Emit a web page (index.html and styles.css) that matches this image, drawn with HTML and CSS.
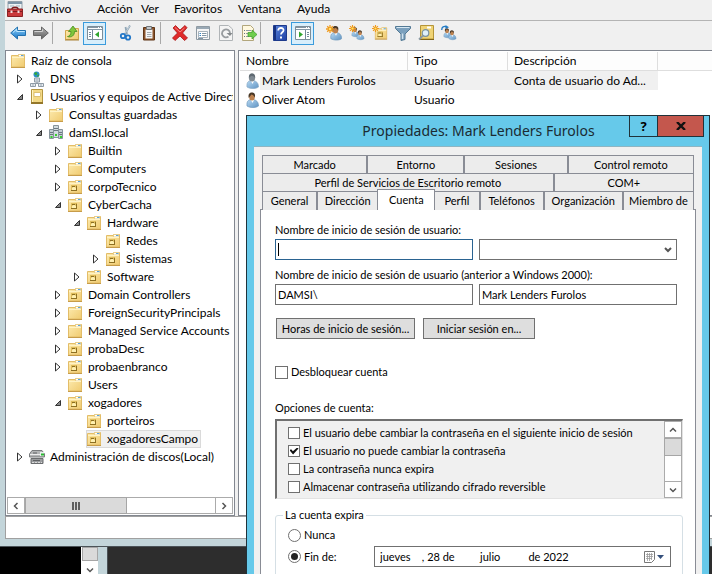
FILE: index.html
```html
<!DOCTYPE html>
<html lang="es">
<head>
<meta charset="utf-8">
<title>Usuarios y equipos de Active Directory</title>
<link rel="stylesheet" href="styles.css">
</head>
<body>
<svg class="sprite" aria-hidden="true">
  <defs>
    <linearGradient id="g-folder" x1="0" y1="0" x2="1" y2="1"><stop offset="0" stop-color="#fdebb0"/><stop offset="1" stop-color="#f0cb70"/></linearGradient>
    <linearGradient id="g-blue" x1="0" y1="0" x2="0" y2="1"><stop offset="0" stop-color="#8fd3fa"/><stop offset="1" stop-color="#1672c4"/></linearGradient>
    <linearGradient id="g-gray" x1="0" y1="0" x2="0" y2="1"><stop offset="0" stop-color="#b5b5b5"/><stop offset="1" stop-color="#5d5d5d"/></linearGradient>
    <linearGradient id="g-body" x1="0" y1="0" x2="1" y2="1"><stop offset="0" stop-color="#b9daf3"/><stop offset="1" stop-color="#5f93c2"/></linearGradient>
    <linearGradient id="g-help" x1="0" y1="0" x2="1" y2="1"><stop offset="0" stop-color="#5b86dc"/><stop offset="1" stop-color="#1d3fa5"/></linearGradient>
  </defs>
  <symbol id="i-folder" viewBox="0 0 16 16">
    <path d="M1.500 2.500h7l1-1h5v12.500h-13z" fill="url(#g-folder)" stroke="#e3bd68"/>
    <path d="M8 1h6v3H8z" fill="#e9cf8c"/><path d="M9 2h4.500v1.500H9z" fill="#fff"/><path d="M11 2h2.500v1H11z" fill="#5aa3d8"/>
    <path d="M2 4.500h12" stroke="#fff3c4"/><path d="M1 14.500h14" stroke="#c79c4a"/>
  </symbol>
  <symbol id="i-ou" viewBox="0 0 16 16">
    <use href="#i-folder"/>
    <path d="M4 6h6v6H4z" fill="#c7a13e"/><path d="M4 6h5.500v5H4z" fill="#dfbd5c"/><path d="M5 9l2-1.500L9 9v2H5z" fill="#fff0b0"/><path d="M4 11.500h6M9.500 7v5M5 7.500h3" stroke="#8d6f22"/>
  </symbol>
  <symbol id="i-dns" viewBox="0 0 16 16">
    <circle cx="7.500" cy="3.500" r="3" fill="#2c8fc9"/><path d="M5 2.500l2-1.500 1.500 1.500-1.500 2zM8.500 4l1.500-.5v1.500l-2 1z" fill="#36a835"/>
    <path d="M5.500 7h5v4h-5z" fill="#dfe5ea" stroke="#8f9ba6"/><path d="M8 11v2M3 12.500h10" stroke="#8f9ba6"/>
    <path d="M1.500 12.500h5v3h-5zM9.500 12.500h5v3h-5z" fill="#e8edf1" stroke="#8f9ba6"/><path d="M6.500 9h3M3 14h2M11 14h2" stroke="#9aa7b3"/>
  </symbol>
  <symbol id="i-aduc" viewBox="0 0 16 16">
    <path d="M2.500.500h11v14h-11z" fill="#f3d985" stroke="#b49640"/><path d="M2 13h12v2H2z" fill="#94772a"/>
    <path d="M5 3.500h6.500v4H5z" fill="#fff" stroke="#dcc071"/><path d="M3.500 1v12" stroke="#fff4c3"/>
  </symbol>
  <symbol id="i-domain" viewBox="0 0 16 16">
    <path d="M5.500.500h5v12h-5z" fill="#d2dbe0" stroke="#87949c"/><path d="M1.500 4.500h4v9h-4zM10.500 4.500h4v9h-4z" fill="#c3cdd3" stroke="#87949c"/>
    <path d="M6 3.500h4M6 5.500h4M2 7.500h3M2 9.500h3M11 7.500h3M11 9.500h3" stroke="#6a7780"/>
    <path d="M2.500 12h2M7 10h2M12 12h2" stroke="#35d02b" stroke-width="2"/>
  </symbol>
  <symbol id="i-disk" viewBox="0 0 16 16">
    <path d="M3 1.500h10l2.500 3.500v3H.500V5z" fill="#b3b5b6" stroke="#7a7c7e"/><path d="M2 9.500h12v5H2z" fill="#9b9d9f" stroke="#6a6c6e"/>
    <path d="M1 5.500h14" stroke="#ededed"/><path d="M4 4h4M4 11.500h7" stroke="#606264"/><path d="M11 3h4v4h-4z" fill="#eceff0"/><path d="M12 5.500h3" stroke="#28b92f" stroke-width="2"/><path d="M3 13.500h10" stroke="#dadada" stroke-dasharray="2 1"/>
  </symbol>
  <symbol id="i-user" viewBox="0 0 16 16">
    <path d="M3 14c-.5-5 1.500-6 4-6.500h2c3 .5 5.500 2 5.500 6.500-3 2.200-8 2-11.500 0z" fill="url(#g-body)" stroke="#6c97bb" stroke-width=".7"/>
    <path d="M7 8l1.500 3L10 8z" fill="#fff"/><ellipse cx="8" cy="5" rx="2.800" ry="3.500" fill="#bd824f"/><path d="M4.800 6c-1-4 1-5.500 3-5.500s4 1 3 5c-1-2-2-3-3.500-3-.5 1-1.500 2-2.500 3.500z" fill="#4a3826"/>
  </symbol>
  <symbol id="i-user-gray" viewBox="0 0 16 16">
    <path d="M3 14c-.5-5 1.500-6 4-6.500h2c3 .5 5.500 2 5.500 6.500-3 2.200-8 2-11.500 0z" fill="url(#g-body)" stroke="#86a9c6" stroke-width=".7"/>
    <path d="M7 8l1.500 3L10 8z" fill="#fff"/><ellipse cx="8" cy="4.500" rx="3.200" ry="4" fill="#808b93"/><path d="M5 5c-.5-3 1-4.500 3-4.500s3.500 1.500 3 4.500c-1-2-4-3-6 0z" fill="#5f6a72"/>
  </symbol>
  <symbol id="i-star" viewBox="0 0 8 8"><path d="M4 0v8M0 4h8M1.200 1.200l5.600 5.600M6.800 1.200L1.200 6.800" stroke="#f09a1c" stroke-width="1.300"/><circle cx="4" cy="4" r="1.200" fill="#ffe36b"/></symbol>
  <symbol id="i-mmc" viewBox="0 0 16 16">
    <path d="M1 .500h14v9H1z" fill="#eef1f3" stroke="#93a0aa"/><path d="M1 2h14" stroke="#7d95a8" stroke-width="2"/><path d="M3 5h4M9 5h4" stroke="#9fb0bd"/>
    <path d="M5 8c0-2.500 6-2.500 6 0" fill="none" stroke="#7a1a1c" stroke-width="1.500"/><path d="M.500 8h15v7.500H.500z" fill="#c9393b" stroke="#8a2224"/><path d="M1 10.500h14" stroke="#7c1d20"/><path d="M3.500 9.500h2v2.500h-2zM10.500 9.500h2v2.500h-2z" fill="#f2dede"/>
  </symbol>
  <symbol id="i-back" viewBox="0 0 16 16"><path d="M.700 8L7.500 2v3.500h8v5h-8V14z" fill="url(#g-blue)" stroke="#2371ae"/><path d="M3 7.500L6.700 4.200v2.300h8" fill="none" stroke="#bde6ff"/></symbol>
  <symbol id="i-forward" viewBox="0 0 16 16"><path d="M15.300 8L8.500 2v3.500h-8v5h8V14z" fill="url(#g-gray)" stroke="#666"/><path d="M1.500 6.500h8V4.300" fill="none" stroke="#d0d0d0"/></symbol>
  <symbol id="i-up" viewBox="0 0 16 16"><path d="M1.500 5.500h6l1.500-2h5.500v11h-13z" fill="url(#g-folder)" stroke="#d2a64c"/><path d="M1 15h14" stroke="#a98137"/><path d="M3.500 11.500c2 0 3.500-2 3.500-5H4.500L9 1l4 5.500h-2.500c0 4-3 6.500-7 5z" fill="#7fc63c" stroke="#458d1f" stroke-width=".8"/></symbol>
  <symbol id="i-pane-l" viewBox="0 0 16 16"><path d="M.500 1.500h15v13H.500z" fill="#fff" stroke="#7d8d99"/><path d="M1 2.500h14M1 4.500h14" stroke="#8496a4"/><path d="M11 2.500h1M13 2.500h1" stroke="#fff"/><path d="M5.500 5v9M2 7.500h2M2 9.500h2M2 11.500h2" stroke="#75899a"/><path d="M12 6.500v6L8 9.500z" fill="#31a52e"/></symbol>
  <symbol id="i-pane-r" viewBox="0 0 16 16"><path d="M.500 1.500h15v13H.500z" fill="#fff" stroke="#7d8d99"/><path d="M1 2.500h14M1 4.500h14" stroke="#8496a4"/><path d="M11 2.500h1M13 2.500h1" stroke="#fff"/><path d="M10.500 5v9M12 7.500h2M12 9.500h2M12 11.500h2" stroke="#75899a"/><path d="M4 6.500v6l4-3z" fill="#31a52e"/></symbol>
  <symbol id="i-cut" viewBox="0 0 16 16"><path d="M12 .500L7 9M7.500 2L9 9.500" stroke="#8fa5b5" stroke-width="1.800"/><path d="M11.500 1L7 8.500" stroke="#dce7ee" stroke-width=".7"/><circle cx="5" cy="11" r="2.200" fill="none" stroke="#2277c8" stroke-width="1.800"/><circle cx="10" cy="12.500" r="2.200" fill="none" stroke="#2277c8" stroke-width="1.800"/></symbol>
  <symbol id="i-paste" viewBox="0 0 16 16"><path d="M2.500 2.500h11v12.500h-11z" fill="#8b542c" stroke="#5f3516"/><path d="M4.500 4.500h7v9h-7z" fill="#f6f6f6"/><path d="M5.500 1.500h5v3h-5z" fill="#c3c7ca" stroke="#6f7478"/><path d="M6 7.500h4.500M6 9.500h4.500M6 11.500h4.500" stroke="#a3a9ad"/></symbol>
  <symbol id="i-delete" viewBox="0 0 16 16"><path d="M1 3l2.500-2.500L8 5l5-4.500 2 2.200L10.500 8l5 5-3 2.500L8 11l-5 4.500L.500 13 5.500 8z" fill="#e02a2a" stroke="#a81818" stroke-width=".8"/><path d="M3 2.500L8 7l4.500-4" fill="none" stroke="#f58a84"/></symbol>
  <symbol id="i-props" viewBox="0 0 16 16"><path d="M1.500 1.500h13v13h-13z" fill="#f6f6f6" stroke="#8e9aa3"/><path d="M2 3h12" stroke="#9aa9b5" stroke-width="2"/><path d="M3.500 6.500h9v6h-9z" fill="#fff" stroke="#a8b3bc"/><path d="M7 8.500h4.500M7 10.500h4.500M3 13.500h5" stroke="#8195a4"/><path d="M4.500 8.500h1.500M4.500 10.500h1.500" stroke="#2f83c4"/></symbol>
  <symbol id="i-refresh" viewBox="0 0 16 16"><path d="M1.500.500h9l4 3.500v11.500h-13z" fill="#f4f4f4" stroke="#b0b4b7"/><path d="M10.500 11.500A4 4 0 1 1 12 8" fill="none" stroke="#989c9f" stroke-width="1.800"/><path d="M8.500 8h6L12 11z" fill="#85898c"/></symbol>
  <symbol id="i-export" viewBox="0 0 16 16"><path d="M1.500.500h8l3 3v12h-11z" fill="#fff8df" stroke="#b2a67c"/><path d="M3 5.500h1M3 8.500h1M3 11.500h1" stroke="#657684"/><path d="M5 5.500h5M5 8.500h3M5 11.500h3" stroke="#929ca4"/><path d="M7 7.500h4V5l5 4.500-5 4.500v-2.500H7z" fill="#6fce4e" stroke="#3a9a2a" stroke-width=".7"/></symbol>
  <symbol id="i-help" viewBox="0 0 16 16"><path d="M1.500.500h13v15h-13z" fill="url(#g-help)" stroke="#1d3a8c"/><path d="M3 1v14" stroke="#173280" stroke-width="2"/><path d="M6.200 5.500C6.200 2 12 2.300 11.500 5.500c-.2 1.800-2.500 1.800-2.500 4" fill="none" stroke="#fff" stroke-width="1.800"/><path d="M8 11.500h2v2H8z" fill="#fff"/></symbol>
  <symbol id="i-newuser" viewBox="0 0 16 16"><use href="#i-user" x="2" y="0" width="15" height="16"/><use href="#i-star" x="0" y="0" width="8" height="8"/></symbol>
  <symbol id="i-newgroup" viewBox="0 0 16 16"><use href="#i-user" x="1" y="1" width="10" height="12"/><use href="#i-user" x="6" y="4" width="10" height="12"/><use href="#i-star" x="0" y="0" width="7" height="7"/></symbol>
  <symbol id="i-newou" viewBox="0 0 16 16"><use href="#i-ou" x="2" y="1" width="14" height="15"/><use href="#i-star" x="0" y="0" width="7" height="7"/></symbol>
  <symbol id="i-filter" viewBox="0 0 16 16"><path d="M.500 1.500h15v2L10 9v5.500l-4 1V9L.500 3.500z" fill="#7ba0bd" stroke="#527994"/><path d="M1.500 2.500h13" stroke="#d6e7f2"/><path d="M7.500 8.500V14" stroke="#d0e2ee" stroke-width="1.500"/></symbol>
  <symbol id="i-find" viewBox="0 0 16 16"><path d="M2.500.500h13v13.500h-13z" fill="#efd375" stroke="#b59538"/><path d="M2 14.500h14" stroke="#816519"/><path d="M9 2.500h4" stroke="#fff" stroke-width="2"/><circle cx="7.500" cy="8" r="3.300" fill="#dff0fa" stroke="#78919f" stroke-width="1.200"/><path d="M5 10.500L1 14.500" stroke="#8b9aa4" stroke-width="1.800"/></symbol>
  <symbol id="i-addgroup" viewBox="0 0 16 16"><use href="#i-user" x="1" y="2" width="10" height="12"/><use href="#i-user" x="6" y="4" width="10" height="12"/><path d="M.800 5C.500 2 3 .8 5.500 1.800" fill="none" stroke="#227bc5" stroke-width="1.300"/><path d="M4.500 0L8 2.200 4.500 4z" fill="#227bc5"/></symbol>
  <symbol id="i-closed" viewBox="0 0 8 10"><path d="M1.500 1L6 5 1.500 9z" fill="#fff" stroke="#333"/></symbol>
  <symbol id="i-open" viewBox="0 0 8 10"><path d="M6.500 2.500v5h-5z" fill="#8a8a8a" stroke="#333"/></symbol>
  <symbol id="i-chev-l" viewBox="0 0 8 8"><path d="M5.500 1L2.500 4l3 3" fill="none" stroke="#555" stroke-width="1.500"/></symbol>
  <symbol id="i-chev-r" viewBox="0 0 8 8"><path d="M2.500 1l3 3-3 3" fill="none" stroke="#555" stroke-width="1.500"/></symbol>
  <symbol id="i-chev-u" viewBox="0 0 8 8"><path d="M1 5.500l3-3 3 3" fill="none" stroke="#555" stroke-width="1.500"/></symbol>
  <symbol id="i-chev-d" viewBox="0 0 8 8"><path d="M1 2.500l3 3 3-3" fill="none" stroke="#555" stroke-width="1.500"/></symbol>
</svg>

<main class="desktop">
  <section class="console">
    <header class="menubar">
      <svg class="icon"><use href="#i-mmc"/></svg>
      <nav class="menus">
        <a href="#">Archivo</a><a href="#">Acción</a><a href="#">Ver</a><a href="#">Favoritos</a><a href="#">Ventana</a><a href="#">Ayuda</a>
      </nav>
    </header>
    <div class="toolbar">
      <button aria-label="Atrás"><svg class="icon"><use href="#i-back"/></svg></button>
      <button aria-label="Adelante"><svg class="icon"><use href="#i-forward"/></svg></button>
      <span class="sep"></span>
      <button aria-label="Subir"><svg class="icon"><use href="#i-up"/></svg></button>
      <button class="on" aria-label="Árbol"><svg class="icon"><use href="#i-pane-l"/></svg></button>
      <span class="space"></span>
      <button aria-label="Cortar"><svg class="icon"><use href="#i-cut"/></svg></button>
      <button aria-label="Pegar"><svg class="icon"><use href="#i-paste"/></svg></button>
      <span class="sep"></span>
      <button aria-label="Eliminar"><svg class="icon"><use href="#i-delete"/></svg></button>
      <button aria-label="Propiedades"><svg class="icon"><use href="#i-props"/></svg></button>
      <button aria-label="Actualizar"><svg class="icon"><use href="#i-refresh"/></svg></button>
      <button aria-label="Exportar"><svg class="icon"><use href="#i-export"/></svg></button>
      <span class="sep"></span>
      <button aria-label="Ayuda"><svg class="icon"><use href="#i-help"/></svg></button>
      <button class="on" aria-label="Acciones"><svg class="icon"><use href="#i-pane-r"/></svg></button>
      <span class="space"></span>
      <button aria-label="Nuevo usuario"><svg class="icon"><use href="#i-newuser"/></svg></button>
      <button aria-label="Nuevo grupo"><svg class="icon"><use href="#i-newgroup"/></svg></button>
      <button aria-label="Nueva unidad"><svg class="icon"><use href="#i-newou"/></svg></button>
      <button aria-label="Filtro"><svg class="icon"><use href="#i-filter"/></svg></button>
      <button aria-label="Buscar"><svg class="icon"><use href="#i-find"/></svg></button>
      <button aria-label="Agregar a grupo"><svg class="icon"><use href="#i-addgroup"/></svg></button>
    </div>
    <div class="panes">
      <div class="tree-pane">
        <ul class="tree">
          <li><div class="node"><svg class="icon"><use href="#i-folder"/></svg><span>Raíz de consola</span></div>
            <ul>
              <li><div class="node"><button class="twist" aria-label="Expandir"><svg><use href="#i-closed"/></svg></button><svg class="icon"><use href="#i-dns"/></svg><span>DNS</span></div></li>
              <li><div class="node"><button class="twist" aria-label="Contraer"><svg><use href="#i-open"/></svg></button><svg class="icon"><use href="#i-aduc"/></svg><span>Usuarios y equipos de Active Directory</span></div>
                <ul>
                  <li><div class="node"><button class="twist" aria-label="Expandir"><svg><use href="#i-closed"/></svg></button><svg class="icon"><use href="#i-folder"/></svg><span>Consultas guardadas</span></div></li>
                  <li><div class="node"><button class="twist" aria-label="Contraer"><svg><use href="#i-open"/></svg></button><svg class="icon"><use href="#i-domain"/></svg><span>damSI.local</span></div>
                    <ul>
                      <li><div class="node"><button class="twist" aria-label="Expandir"><svg><use href="#i-closed"/></svg></button><svg class="icon"><use href="#i-folder"/></svg><span>Builtin</span></div></li>
                      <li><div class="node"><button class="twist" aria-label="Expandir"><svg><use href="#i-closed"/></svg></button><svg class="icon"><use href="#i-folder"/></svg><span>Computers</span></div></li>
                      <li><div class="node"><button class="twist" aria-label="Expandir"><svg><use href="#i-closed"/></svg></button><svg class="icon"><use href="#i-ou"/></svg><span>corpoTecnico</span></div></li>
                      <li><div class="node"><button class="twist" aria-label="Contraer"><svg><use href="#i-open"/></svg></button><svg class="icon"><use href="#i-ou"/></svg><span>CyberCacha</span></div>
                        <ul>
                          <li><div class="node"><button class="twist" aria-label="Contraer"><svg><use href="#i-open"/></svg></button><svg class="icon"><use href="#i-ou"/></svg><span>Hardware</span></div>
                            <ul>
                              <li><div class="node"><span class="twist"></span><svg class="icon"><use href="#i-ou"/></svg><span>Redes</span></div></li>
                              <li><div class="node"><button class="twist" aria-label="Expandir"><svg><use href="#i-closed"/></svg></button><svg class="icon"><use href="#i-ou"/></svg><span>Sistemas</span></div></li>
                            </ul>
                          </li>
                          <li><div class="node"><button class="twist" aria-label="Expandir"><svg><use href="#i-closed"/></svg></button><svg class="icon"><use href="#i-ou"/></svg><span>Software</span></div></li>
                        </ul>
                      </li>
                      <li><div class="node"><button class="twist" aria-label="Expandir"><svg><use href="#i-closed"/></svg></button><svg class="icon"><use href="#i-ou"/></svg><span>Domain Controllers</span></div></li>
                      <li><div class="node"><button class="twist" aria-label="Expandir"><svg><use href="#i-closed"/></svg></button><svg class="icon"><use href="#i-folder"/></svg><span>ForeignSecurityPrincipals</span></div></li>
                      <li><div class="node"><button class="twist" aria-label="Expandir"><svg><use href="#i-closed"/></svg></button><svg class="icon"><use href="#i-folder"/></svg><span>Managed Service Accounts</span></div></li>
                      <li><div class="node"><button class="twist" aria-label="Expandir"><svg><use href="#i-closed"/></svg></button><svg class="icon"><use href="#i-ou"/></svg><span>probaDesc</span></div></li>
                      <li><div class="node"><button class="twist" aria-label="Expandir"><svg><use href="#i-closed"/></svg></button><svg class="icon"><use href="#i-ou"/></svg><span>probaenbranco</span></div></li>
                      <li><div class="node"><span class="twist"></span><svg class="icon"><use href="#i-folder"/></svg><span>Users</span></div></li>
                      <li><div class="node"><button class="twist" aria-label="Contraer"><svg><use href="#i-open"/></svg></button><svg class="icon"><use href="#i-ou"/></svg><span>xogadores</span></div>
                        <ul>
                          <li><div class="node"><span class="twist"></span><svg class="icon"><use href="#i-ou"/></svg><span>porteiros</span></div></li>
                          <li><div class="node"><span class="twist"></span><div class="selected"><svg class="icon"><use href="#i-ou"/></svg><span>xogadoresCampo</span></div></div></li>
                        </ul>
                      </li>
                    </ul>
                  </li>
                </ul>
              </li>
              <li><div class="node"><button class="twist" aria-label="Expandir"><svg><use href="#i-closed"/></svg></button><svg class="icon"><use href="#i-disk"/></svg><span>Administración de discos(Local)</span></div></li>
            </ul>
          </li>
        </ul>
        <div class="hscroll">
          <button aria-label="Izquierda"><svg class="chev"><use href="#i-chev-l"/></svg></button>
          <div class="hthumb"><i></i><i></i><i></i></div>
          <div class="track"></div>
          <button aria-label="Derecha"><svg class="chev"><use href="#i-chev-r"/></svg></button>
        </div>
      </div>
      <div class="list-pane">
        <table>
          <colgroup><col class="c-name"><col class="c-type"><col class="c-desc"><col></colgroup>
          <thead><tr><th>Nombre</th><th>Tipo</th><th>Descripción</th><th></th></tr></thead>
          <tbody>
            <tr class="current"><td><div class="who"><svg class="icon"><use href="#i-user-gray"/></svg><span>Mark Lenders Furolos</span></div></td><td>Usuario</td><td>Conta de usuario do Ad...</td><td></td></tr>
            <tr><td><div class="who"><svg class="icon"><use href="#i-user"/></svg><span>Oliver Atom</span></div></td><td>Usuario</td><td></td><td></td></tr>
          </tbody>
        </table>
      </div>
    </div>
    <footer class="status"></footer>
  </section>
  <div class="behind">
    <div class="terminal"></div>
    <div class="vbar"><div class="vthumb"></div><svg class="chev"><use href="#i-chev-d"/></svg></div>
    <div class="edge"></div>
    <div class="wall"></div>
  </div>

  <section class="dialog" role="dialog" aria-labelledby="dlg-title">
    <header class="titlebar">
      <h1 id="dlg-title">Propiedades: Mark Lenders Furolos</h1>
      <div class="caption">
        <button class="help" aria-label="Ayuda">?</button>
        <button class="close" aria-label="Cerrar"><svg viewBox="0 0 10 8"><path d="M1 0l8 8M9 0L1 8" stroke="#111" stroke-width="2.400"/></svg></button>
      </div>
    </header>
    <div class="client">
      <div class="tabs">
        <div class="tabrow row-a"><button>Marcado</button><button>Entorno</button><button>Sesiones</button><button>Control remoto</button></div>
        <div class="tabrow row-b"><button>Perfil de Servicios de Escritorio remoto</button><button>COM+</button></div>
        <div class="tabrow row-c"><button>General</button><button>Dirección</button><button class="active">Cuenta</button><button>Perfil</button><button>Teléfonos</button><button>Organización</button><button>Miembro de</button></div>
      </div>
      <form class="panel">
        <label for="upn">Nombre de inicio de sesión de usuario:</label>
        <div class="pair">
          <div class="field focus"><i class="caret"></i><input id="upn" type="text"></div>
          <div class="field combo"><select aria-label="Sufijo UPN"><option></option></select><svg viewBox="0 0 8 8"><path d="M1 2l3 3 3-3" fill="none" stroke="#555" stroke-width="2"/></svg></div>
        </div>
        <label for="sam">Nombre de inicio de sesión de usuario (anterior a Windows 2000):</label>
        <div class="pair">
          <div class="field"><input type="text" value="DAMSI\" aria-label="Dominio" readonly></div>
          <div class="field"><input id="sam" type="text" value="Mark Lenders Furolos"></div>
        </div>
        <div class="actions"><button type="button" class="hours">Horas de inicio de sesión...</button><button type="button" class="logon">Iniciar sesión en...</button></div>
        <label class="check unlock"><input type="checkbox"><span>Desbloquear cuenta</span></label>
        <div class="caption-text">Opciones de cuenta:</div>
        <div class="options">
          <div class="optlist">
            <label class="check"><input type="checkbox"><span>El usuario debe cambiar la contraseña en el siguiente inicio de sesión</span></label>
            <label class="check"><input type="checkbox" checked><span>El usuario no puede cambiar la contraseña</span></label>
            <label class="check"><input type="checkbox"><span>La contraseña nunca expira</span></label>
            <label class="check"><input type="checkbox"><span>Almacenar contraseña utilizando cifrado reversible</span></label>
          </div>
          <div class="vscroll">
            <button type="button" aria-label="Arriba"><svg class="chev"><use href="#i-chev-u"/></svg></button>
            <div class="vthumb"></div><div class="track"></div>
            <button type="button" aria-label="Abajo"><svg class="chev"><use href="#i-chev-d"/></svg></button>
          </div>
        </div>
        <fieldset>
          <legend>La cuenta expira</legend>
          <label class="check"><input type="radio" name="exp"><span>Nunca</span></label>
          <div class="until">
            <label class="check"><input type="radio" name="exp" checked><span>Fin de:</span></label>
            <div class="field date">
              <input type="text" aria-label="Fecha" value="jueves    , 28 de         julio          de 2022">
              <svg viewBox="0 0 20 12"><path d="M.500.500h10v8l-3 3h-7z" fill="#fff" stroke="#777"/><path d="M2 3.500h7M2 5.500h7M2 7.500h6M3.500 2v8M5.500 2v8M7.500 2v7" stroke="#9a9a9a" stroke-width=".8"/><path d="M13 4h7l-3.500 4z" fill="#35507c"/></svg>
            </div>
          </div>
        </fieldset>
      </form>
    </div>
  </section>
</main>
</body>
</html>
```
FILE: styles.css
```css
* { box-sizing: border-box; }

body {
  margin: 0;
  font: 12px/18px Lato, "Open Sans", sans-serif;
  color: #000;
}

ul { list-style: none; margin: 0; padding: 0; }
button { font: inherit; color: inherit; padding: 0; border: 0; background: none; }
svg { display: block; flex: none; }

.sprite { position: absolute; width: 0; height: 0; }
.icon { width: 16px; height: 16px; }
.chev { width: 8px; height: 8px; }

.desktop {
  position: relative;
  display: flex;
  flex-direction: column;
  height: 100vh;
  overflow: hidden;
  background: #2d2d2d;
}

/* Console window */
.console {
  flex: 1;
  min-height: 0;
  display: flex;
  flex-direction: column;
  padding: 0 0 7px 5px;
  background: #c3d5da;
  border-bottom: 1px solid #4b5358;
}

.menubar {
  display: flex;
  align-items: center;
  gap: 8px;
  height: 21px;
  padding: 0 0 2px 2px;
  background: #f0f0f0;
  border-bottom: 1px solid #b4b4b4;
}

.menus {
  display: grid;
  grid-template-columns: 66px 44px 33px 64px 59px auto;
}

.menus a { color: inherit; text-decoration: none; }

.toolbar {
  display: flex;
  align-items: center;
  height: 29px;
  padding: 0 0 5px 1px;
  background: #f0f0f0;
}

.toolbar button {
  display: grid;
  place-items: center;
  width: 23px;
  height: 23px;
}

.toolbar .on {
  background: #d8eefb;
  border: 1px solid #3a9bdc;
}

.sep { width: 1px; height: 22px; margin: 0 7px 0 0; background: #a8a8a8; }
.space { width: 8px; }

.panes {
  flex: 1;
  min-height: 0;
  display: flex;
  gap: 3px;
  background: #f0f0f0;
}

.tree-pane {
  width: 230px;
  display: flex;
  flex-direction: column;
  padding: 1px;
  overflow: hidden;
  background: #fff;
  border: 1px solid #828790;
}

.tree { flex: 1; min-height: 0; overflow: hidden; padding-left: 3px; }
.tree ul { padding-left: 5px; }
.tree ul ul { padding-left: 19px; }

.node {
  display: flex;
  align-items: center;
  height: 18px;
  white-space: nowrap;
}

.node .icon { margin-right: 5px; }
.twist { flex: none; width: 14px; height: 18px; display: flex; align-items: center; padding-left: 1px; }
.twist svg { width: 8px; height: 10px; }

.selected {
  display: flex;
  align-items: center;
  height: 18px;
  padding-right: 3px;
  background: #f0f0f0;
  outline: 1px solid #dadada;
  outline-offset: -1px;
}

.hscroll { display: flex; height: 17px; }

.hscroll button, .vscroll button {
  display: grid;
  place-items: center;
  width: 18px;
  height: 17px;
  background: #fff;
  border: 1px solid #ababab;
}

.hthumb {
  display: flex;
  align-items: center;
  justify-content: center;
  gap: 1px;
  width: 102px;
  background: #dadada;
  border: 1px solid #a6a6a6;
}

.hthumb i { width: 2px; height: 8px; background: #606060; }
.track { flex: 1; background: #fff; }
.hscroll .track { border: solid #ababab; border-width: 1px 0; }
.vscroll .track { border: solid #ababab; border-width: 0 1px; }

.list-pane {
  flex: 1;
  min-width: 0;
  padding: 1px 0 0 1px;
  background: #fff;
  border: 1px solid #828790;
  border-right: 0;
}

table { width: 100%; table-layout: fixed; border-collapse: separate; border-spacing: 0; }
.c-name { width: 168px; }
.c-type { width: 100px; }
.c-desc { width: 150px; }

th {
  height: 19px;
  padding: 0 0 0 6px;
  font-weight: 400;
  text-align: left;
  line-height: 18px;
  background: #fdfdfd;
  border-right: 1px solid #dedede;
  border-bottom: 1px solid #dedede;
}

th:last-child { border-right: 0; }

td { height: 19px; padding: 0 0 0 6px; white-space: nowrap; }
td:first-child { padding-left: 4px; }
.current td:nth-child(-n+3) { background: #f0f0f0; }
.current td:first-child { background: linear-gradient(90deg, #fff 20px, #f0f0f0 20px); }
.who { display: flex; align-items: center; gap: 2px; }

.status {
  height: 23px;
  background: #fff;
  border: 1px solid #a0a0a0;
  border-width: 1px 0 1px 1px;
}

/* Windows under the console */
.behind { display: flex; height: 27px; }
.terminal { width: 81px; background: #000; }
.vbar { width: 17px; display: flex; flex-direction: column; align-items: center; gap: 5px; background: #fff; }
.vbar .vthumb { width: 16px; }
.edge { width: 10px; background: #c3d5da; border-right: 1px solid #4b5358; }
.wall { flex: 1; background: #2d2d2d; }
.vthumb { height: 18px; background: #dadada; border: 1px solid #a6a6a6; }

/* Properties dialog */
.dialog {
  position: absolute;
  top: 115px;
  right: 2px;
  bottom: 0;
  left: 246px;
  padding: 0 7px;
  overflow: hidden;
  background: #66c9ea;
  border: 1px solid #20323a;
  border-bottom: 0;
  font: 11px/14px Lato, "Liberation Sans", sans-serif;
}

.titlebar { display: flex; justify-content: flex-end; height: 30px; }

h1 {
  flex: 1;
  margin: 0;
  padding-left: 74px;
  font: 14px/30px "Noto Sans", "Open Sans", sans-serif;
  color: #1b2b33;
  text-align: center;
  white-space: nowrap;
}

.caption { display: flex; height: 21px; margin-right: -2px; }

.caption button {
  display: grid;
  place-items: center;
  border: 1px solid #20323a;
  border-top: 0;
}

.caption .help { width: 29px; font: bold 13px/18px "Noto Sans", sans-serif; }
.caption .close { width: 47px; margin-left: -1px; background: #c4574d; }
.caption svg { width: 10px; height: 8px; }

.client {
  padding: 8px 6px 0;
  background: #f0f0f0;
  border-top: 1px solid #8fb5c2;
}

.tabs { padding: 0 2px; }

.tabrow { display: grid; height: 18px; }
.row-a { grid-template-columns: 105fr 97fr 103fr 126fr; }
.row-b { grid-template-columns: 291fr 140fr; }
.row-c { grid-template-columns: 55fr 61fr 56fr 45fr 64fr 79fr 71fr; }

.tabrow button {
  min-width: 0;
  overflow: hidden;
  white-space: nowrap;
  background: #ececec;
  border: 1px solid #898c95;
  border-bottom: 0;
}

.tabrow .active {
  position: relative;
  height: 21px;
  margin: -2px -1px 0;
  background: #fff;
}

.panel {
  height: 400px;
  padding: 13px 12px 0 14px;
  background: #fff;
  border: 1px solid #898c95;
}

.panel > label, .caption-text { display: block; height: 14px; }

.pair {
  display: grid;
  grid-template-columns: 1fr 1fr;
  gap: 6px;
  margin: 2px 6px 8px 0;
}

.field {
  position: relative;
  display: flex;
  align-items: center;
  height: 21px;
  background: #fff;
  border: 1px solid #707070;
}

.field input, .field select {
  width: 100%;
  height: 19px;
  padding: 0 2px;
  border: 0;
  outline: 0;
  background: none;
  font: inherit;
  color: inherit;
  appearance: none;
}

.focus { border-color: #2a6391; }
.caret { flex: none; width: 1px; height: 13px; margin-left: 2px; background: #000; }
.combo svg { width: 8px; height: 8px; margin-right: 4px; }

.actions { display: flex; gap: 8px; margin: 13px 0 0 1px; }
.actions button { height: 21px; background: #dedede; border: 1px solid #707070; }
.hours { width: 139px; }
.logon { width: 112px; }

.check { display: flex; align-items: center; gap: 3px; height: 18px; white-space: nowrap; }

.check input {
  appearance: none;
  flex: none;
  display: grid;
  place-items: center;
  width: 13px;
  height: 13px;
  margin: 0;
  background: #fff;
  border: 1px solid #707070;
}

.optlist .check input { width: 12px; height: 12px; }

.check input[type="checkbox"]:checked::before {
  content: "";
  width: 9px;
  height: 7px;
  background: #111;
  clip-path: polygon(0 40%, 18% 25%, 38% 52%, 85% 0, 100% 16%, 40% 100%);
}

.check input[type="radio"] { border-radius: 50%; }
.check input[type="radio"]:checked::before { content: ""; width: 7px; height: 7px; border-radius: 50%; background: #222; }

.panel > .unlock { display: flex; height: 18px; margin: 24px 0 20px; }

.options {
  display: flex;
  height: 80px;
  margin-top: 4px;
  background: #f0f0f0;
  border: 1px solid #e3e3e3;
  border-top: 2px solid #707070;
  border-left: 2px solid #707070;
}

.optlist { flex: 1; min-width: 0; padding: 3px 0 0 11px; overflow: hidden; }
.vscroll { display: flex; flex-direction: column; width: 18px; }

fieldset {
  min-width: 0;
  height: 100px;
  margin: 9px 0 0;
  padding: 4px 11px 0 12px;
  border: 1px solid #d5dfe5;
  border-radius: 3px;
}

legend { margin-left: -5px; padding: 0 2px; }
.until { display: flex; align-items: center; justify-content: space-between; height: 21px; margin-top: 2px; }
.date { width: 297px; }
.date input { padding-left: 5px; white-space: pre; }
.date svg { width: 20px; height: 12px; margin-right: 6px; }
```
